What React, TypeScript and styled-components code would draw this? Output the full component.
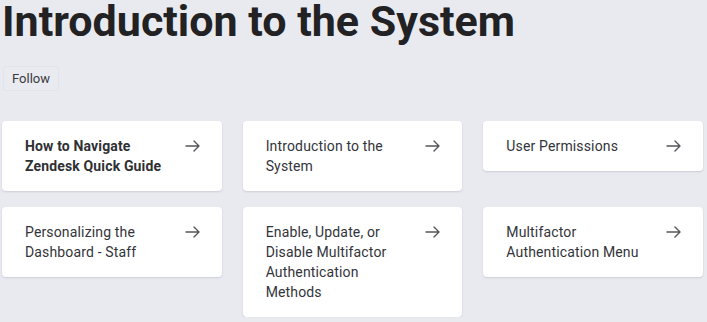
import styled, { createGlobalStyle } from 'styled-components';

const GlobalStyle = createGlobalStyle`
  body {
    margin: 0;
    background: #e9eaf0;
    font-family: Roboto, "Liberation Sans", sans-serif;
    color: #2f3033;
  }
`;

const Page = styled.div`
  padding: 0 4px 0 2px;
`;

const Title = styled.h1`
  margin: 0;
  font-size: 43px;
  line-height: 42px;
  font-weight: 700;
  color: #222224;
`;

const FollowButton = styled.button`
  display: block;
  margin-top: 24px;
  margin-left: 1px;
  height: 25px;
  padding: 0 8px;
  border: 1px solid #e2e4eb;
  border-radius: 3px;
  background: #eaebf0;
  font-family: inherit;
  font-size: 13px;
  color: #3a3b3f;
  cursor: pointer;
`;

const Grid = styled.div`
  margin-top: 30px;
  display: grid;
  grid-template-columns: repeat(3, 1fr);
  column-gap: 21px;
  row-gap: 16px;
  align-items: start;
`;

const Card = styled.a`
  display: flex;
  align-items: flex-start;
  justify-content: space-between;
  padding: 15px 22px 15px 23px;
  background: #fff;
  border-radius: 4px;
  box-shadow: 0 1px 2px rgba(20, 30, 50, 0.14);
  text-decoration: none;
`;

const CardTitle = styled.span<{ $strong?: boolean }>`
  width: 142px;
  font-size: 14px;
  line-height: 20px;
  letter-spacing: 0.15px;
  font-weight: ${(p) => (p.$strong ? 700 : 400)};
  color: ${(p) => (p.$strong ? '#2f3033' : '#33343a')};
`;

const Arrow = styled.svg`
  flex: none;
  margin-top: 4px;
  width: 15px;
  height: 12px;
`;

const items = [
  'How to Navigate Zendesk Quick Guide',
  'Introduction to the System',
  'User Permissions',
  'Personalizing the Dashboard - Staff',
  'Enable, Update, or Disable Multifactor Authentication Methods',
  'Multifactor Authentication Menu',
];

export default function App() {
  return (
    <Page>
      <GlobalStyle />
      <Title>Introduction to the System</Title>
      <FollowButton>Follow</FollowButton>
      <Grid>
        {items.map((t, i) => (
          <Card key={t} href="#">
            <CardTitle $strong={i === 0}>{t}</CardTitle>
            <Arrow viewBox="0 0 15 12" fill="none" stroke="#55565a" strokeWidth="1.4" strokeLinecap="round" strokeLinejoin="round">
              <path d="M1 6h13M9 1l5 5-5 5" />
            </Arrow>
          </Card>
        ))}
      </Grid>
    </Page>
  );
}
